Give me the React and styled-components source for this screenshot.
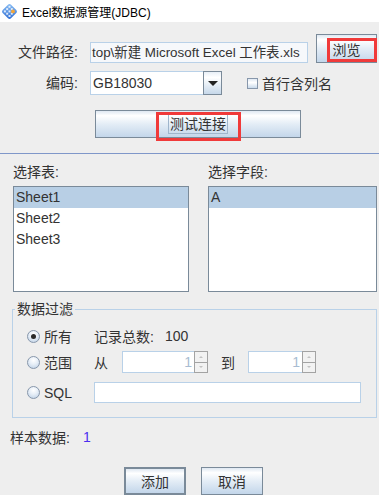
import React from 'react'
import styled, { createGlobalStyle } from 'styled-components'

const GlobalStyle = createGlobalStyle`
    body {
        margin: 0;
        background: #eeeeee;
        font-family: "Liberation Sans", "Noto Sans CJK SC", sans-serif;
        font-size: 14px;
        color: #333333;
    }
`

const Window = styled.div`
    width: 379px;
    height: 495px;
    overflow: hidden;
    background: #eeeeee;
`

const TitleBar = styled.div`
    height: 22px;
    background: #ffffff;
    display: flex;
    align-items: center;
    gap: 5px;
    padding-left: 2px;
    font-size: 12px;
    color: #000;
`

const FormRow = styled.div`
    display: flex;
    align-items: ${p => p.$align || 'center'};
    height: ${p => p.$h}px;
    margin-top: ${p => p.$top}px;
`

const Label = styled.span`
    width: 78px;
    text-align: right;
    line-height: 21px;
    margin-right: 12px;
    white-space: nowrap;
`

const PathField = styled.div`
    box-sizing: border-box;
    width: 218px;
    height: 21px;
    border: 1px solid #b9d1e8;
    background: #f6f8fb;
    padding: 0 1px;
    line-height: 19px;
    white-space: nowrap;
    overflow: hidden;
    font-size: 13.4px;
`

const Button = styled.button`
    position: relative;
    box-sizing: border-box;
    width: ${p => p.$w}px;
    height: ${p => p.$h || 28}px;
    margin: 0;
    padding: 0;
    border: ${p => (p.$default ? 2 : 1)}px solid #7a8a99;
    background: linear-gradient(to bottom, #dfe8f2 0%, #ffffff 18%, #e4edf6 50%, #c3d6ea 100%);
    font-family: inherit;
    font-size: 14px;
    color: #333;
    display: flex;
    align-items: center;
    justify-content: center;
`

const RedBox = styled.div`
    position: absolute;
    left: ${p => p.$x}px;
    top: ${p => p.$y}px;
    width: ${p => p.$w}px;
    height: ${p => p.$h}px;
    box-sizing: border-box;
    border: 3px solid #f03a3a;
    pointer-events: none;
`

const FocusText = styled.span`
    border: 1px solid #9fb5cc;
    padding: 0 1px;
    line-height: 18px;
`

const Combo = styled.div`
    box-sizing: border-box;
    width: 132px;
    height: 24px;
    display: flex;
    border: 1px solid #b9d1e8;
    background: #fff;
`

const ComboText = styled.div`
    flex: 1;
    padding-left: 2px;
    line-height: 22px;
`

const ComboArrow = styled.div`
    width: 17px;
    border: 1px solid #7a8a99;
    margin: -1px -1px -1px 0;
    background: linear-gradient(to bottom, #e8eff7, #ffffff 25%, #c6d8ea);
    display: flex;
    align-items: center;
    justify-content: center;
    &::after {
        content: '';
        border-left: 5px solid transparent;
        border-right: 5px solid transparent;
        border-top: 5px solid #222;
    }
`

const Check = styled.span`
    box-sizing: border-box;
    width: 11px;
    height: 11px;
    border: 1px solid #8797ab;
    background: linear-gradient(to bottom, #e0e9f3, #ffffff 40%, #c9daeb);
    margin: 0 4px 0 25px;
`

const Separator = styled.div`
    margin-top: 15px;
    border-top: 1px solid #7f97c9;
`

const Lists = styled.div`
    display: grid;
    grid-template-columns: 195px 1fr;
    margin-top: 8px;
`

const ListCol = styled.div`
    display: flex;
    flex-direction: column;
    padding-left: ${p => p.$pad}px;
    padding-right: ${p => p.$right}px;
`

const ListLabel = styled.div`
    line-height: 20px;
    padding-left: ${p => p.$shift || 0}px;
    margin-bottom: 4px;
`

const ListBox = styled.div`
    box-sizing: border-box;
    height: 106px;
    border: 1px solid #7a8a99;
    background: #fff;
`

const ListItem = styled.div`
    height: 21px;
    line-height: 21px;
    padding-left: 2px;
    background: ${p => (p.$selected ? '#b8cfe5' : 'transparent')};
`

const Group = styled.fieldset`
    margin: 7px 2px 0 12px;
    padding: 0 0 14px 2px;
    border: 1px solid #b9d1e8;
    min-width: 0;
`

const Legend = styled.legend`
    padding: 0 2px;
    line-height: 20px;
`

const FilterGrid = styled.div`
    display: grid;
    grid-template-columns: 67px 1fr;
    padding-left: 12px;
    margin-top: 6px;
`

const FilterRow = styled.div`
    display: contents;
`

const Cell = styled.div`
    display: flex;
    align-items: center;
    height: ${p => p.$h || 22}px;
    margin-top: ${p => p.$top || 0}px;
`

const Radio = styled.span`
    box-sizing: border-box;
    width: 13px;
    height: 13px;
    border-radius: 50%;
    border: 1px solid #8797ab;
    background: radial-gradient(circle at 50% 30%, #ffffff 0%, #e6eef7 45%, #b9cde3 100%);
    margin-right: 4px;
    display: flex;
    align-items: center;
    justify-content: center;
    &::after {
        content: '';
        display: ${p => (p.$on ? 'block' : 'none')};
        width: 5px;
        height: 5px;
        border-radius: 50%;
        background: #2a2a2a;
    }
`

const Muted = styled.span`
    margin-right: ${p => p.$gap || 0}px;
`

const Spinner = styled.div`
    box-sizing: border-box;
    display: flex;
    width: ${p => p.$w}px;
    height: 22px;
    border: 1px solid #b9d1e8;
    background: #fff;
`

const SpinValue = styled.div`
    flex: 1;
    text-align: right;
    padding-right: 2px;
    line-height: 20px;
    color: #a8bcd2;
`

const SpinButtons = styled.div`
    width: 14px;
    margin: -1px -1px -1px 0;
    display: flex;
    flex-direction: column;
`

const SpinHalf = styled.div`
    flex: 1;
    box-sizing: border-box;
    border: 1px solid #a3a3a3;
    margin-top: ${p => (p.$down ? -1 : 0)}px;
    background: #f2f2f2;
    display: flex;
    align-items: center;
    justify-content: center;
    &::after {
        content: '';
        border-left: 2px solid transparent;
        border-right: 2px solid transparent;
        ${p => (p.$down ? 'border-top: 2px solid #c2c2c2;' : 'border-bottom: 2px solid #c2c2c2;')}
    }
`

const SqlField = styled.div`
    box-sizing: border-box;
    width: 267px;
    height: 21px;
    border: 1px solid #b9d1e8;
    background: #fff;
`

const SampleRow = styled.div`
    display: flex;
    align-items: center;
    height: 20px;
    padding-left: 10px;
    margin-top: 9px;
`

const SampleValue = styled.span`
    color: #4b2ef0;
    margin-left: 13px;
`

const Actions = styled.div`
    display: flex;
    justify-content: center;
    gap: 15px;
    padding-left: 8px;
    margin-top: 20px;
`

function AppIcon() {
    return (
        <svg width="15" height="15" viewBox="0 0 15 15">
            <defs>
                <linearGradient id="ig" x1="0" y1="0" x2="1" y2="1">
                    <stop offset="0" stopColor="#8cc0f5" />
                    <stop offset="1" stopColor="#2d6cd3" />
                </linearGradient>
            </defs>
            <rect x="1.6" y="1.6" width="11.8" height="11.8" rx="2.5" transform="rotate(45 7.5 7.5)" fill="url(#ig)" />
            {[[7.5, 2.8], [5.2, 5.1], [9.8, 5.1], [2.9, 7.4], [7.5, 7.4], [5.2, 9.7], [9.8, 9.7], [7.5, 12]].map(([x, y], i) => (
                <rect key={i} x={x - 1} y={y - 1} width="2" height="2" fill="#ffffff" opacity="0.8" />
            ))}
            <circle cx="11" cy="7.4" r="1.9" fill="#f3a73a" />
        </svg>
    )
}

function Spin({ w }) {
    return (
        <Spinner $w={w}>
            <SpinValue>1</SpinValue>
            <SpinButtons>
                <SpinHalf />
                <SpinHalf $down />
            </SpinButtons>
        </Spinner>
    )
}

export default function App() {
    return (
        <Window>
            <GlobalStyle />
            <TitleBar>
                <AppIcon />
                <span>Excel数据源管理(JDBC)</span>
            </TitleBar>

            <FormRow $h={29} $top={12} $align="flex-end">
                <Label>文件路径:</Label>
                <PathField>top\新建 Microsoft Excel 工作表.xls</PathField>
                <Button $w={61} $h={29} style={{ marginLeft: 8 }}>
                    浏览
                    <RedBox $x={10} $y={3} $w={50} $h={24} />
                </Button>
            </FormRow>

            <FormRow $h={24} $top={8}>
                <Label>编码:</Label>
                <Combo>
                    <ComboText>GB18030</ComboText>
                    <ComboArrow />
                </Combo>
                <Check />
                <span>首行含列名</span>
            </FormRow>

            <FormRow $h={28} $top={15}>
                <Button $w={206} style={{ marginLeft: 95 }}>
                    <FocusText>测试连接</FocusText>
                    <RedBox $x={60} $y={1} $w={85} $h={29} />
                </Button>
            </FormRow>

            <Separator />

            <Lists>
                <ListCol $pad={13} $right={6}>
                    <ListLabel $shift={-3}>选择表:</ListLabel>
                    <ListBox>
                        <ListItem $selected>Sheet1</ListItem>
                        <ListItem>Sheet2</ListItem>
                        <ListItem>Sheet3</ListItem>
                    </ListBox>
                </ListCol>
                <ListCol $pad={13} $right={2}>
                    <ListLabel>选择字段:</ListLabel>
                    <ListBox>
                        <ListItem $selected>A</ListItem>
                    </ListBox>
                </ListCol>
            </Lists>

            <Group>
                <Legend>数据过滤</Legend>
                <FilterGrid>
                    <FilterRow>
                        <Cell><Radio $on />所有</Cell>
                        <Cell><Muted $gap={11}>记录总数:</Muted>100</Cell>
                    </FilterRow>
                    <FilterRow>
                        <Cell $top={4}><Radio />范围</Cell>
                        <Cell $top={4}>
                            <Muted $gap={14}>从</Muted>
                            <Spin w={86} />
                            <Muted style={{ margin: '0 13px' }}>到</Muted>
                            <Spin w={68} />
                        </Cell>
                    </FilterRow>
                    <FilterRow>
                        <Cell $top={9} $h={21}><Radio />SQL</Cell>
                        <Cell $top={9} $h={21}><SqlField /></Cell>
                    </FilterRow>
                </FilterGrid>
            </Group>

            <SampleRow>
                样本数据:<SampleValue>1</SampleValue>
            </SampleRow>

            <Actions>
                <Button $w={62} $default>添加</Button>
                <Button $w={62}>取消</Button>
            </Actions>
        </Window>
    )
}
